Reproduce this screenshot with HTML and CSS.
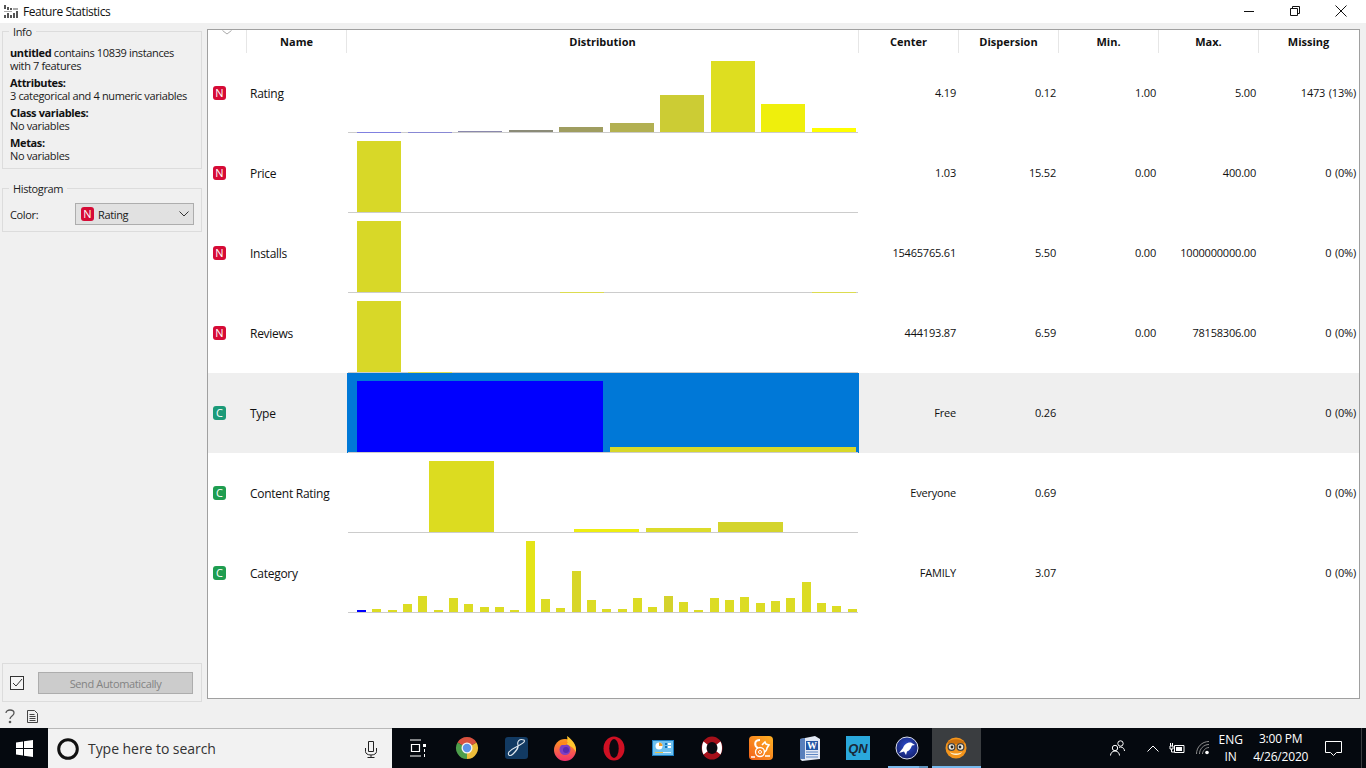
FILE: index.html
```html
<!DOCTYPE html>
<html lang="en">
<head>
<meta charset="utf-8">
<title>Feature Statistics</title>
<link rel="stylesheet" href="styles.css">
</head>
<body>
<div class="window">
  <header class="titlebar">
    <svg class="app-icon" width="15" height="13" viewBox="0 0 15 13"><path fill="#555" d="M0 0h2v4H0zM3 2h2v3H3zM6 3h2v2H6zM0 10h2v3H0zM3 8h2v5H3zM6 10h2v3H6zM9 8h2v5H9zM12 6h2v7h-2z"/><path fill="#aaa" d="M0 6h8v1H0zM9 3h5v2H9z"/></svg>
    <span class="title">Feature Statistics</span>
    <div class="controls">
      <svg width="12" height="12" viewBox="0 0 12 12"><path stroke="#111" d="M1 6.500h10"/></svg>
      <svg width="12" height="12" viewBox="0 0 12 12" fill="none"><path stroke="#111" d="M1.500 3.500h7v7h-7zM3.500 3.500v-2h7v7h-2"/></svg>
      <svg width="12" height="12" viewBox="0 0 12 12"><path stroke="#111" d="M.5.500l11 11M11.500.500l-11 11"/></svg>
    </div>
  </header>
  <main class="main">
    <aside class="sidebar">
      <fieldset class="group">
        <legend>Info</legend>
        <p><b>untitled</b> contains 10839 instances<br>with 7 features</p>
        <p><b>Attributes:</b><br>3 categorical and 4 numeric variables</p>
        <p><b>Class variables:</b><br>No variables</p>
        <p><b>Metas:</b><br>No variables</p>
      </fieldset>
      <fieldset class="group histogram">
        <legend>Histogram</legend>
        <div class="color-row">
          <span>Color:</span>
          <div class="combo">
            <span class="badge num">N</span>
            <span class="combo-text">Rating</span>
            <svg width="10" height="6" viewBox="0 0 10 6" fill="none"><path stroke="#333" d="M.5.500L5 5 9.500.500"/></svg>
          </div>
        </div>
      </fieldset>
      <div class="send-box">
        <span class="check"><svg width="12" height="12" viewBox="0 0 12 12" fill="none"><path stroke="#333" d="M2 6l3 3 6-7"/></svg></span>
        <div class="send-btn">Send Automatically</div>
      </div>
      <div class="footer-icons">
        <svg width="10" height="15" viewBox="0 0 10 15" fill="none"><path stroke="#555" stroke-width="1.300" d="M1 4c0-4 8-4 8 0 0 3-4 3-4 6"/><circle cx="5" cy="13" r="1.300" fill="#555"/></svg>
        <svg width="11" height="13" viewBox="0 0 11 13" fill="none"><path stroke="#444" d="M.5.500h7l3 3v9H.500zM2.500 4.500h5M2.500 6.500h6M2.500 8.500h6M2.500 10.500h6"/></svg>
      </div>
    </aside>
    <section class="content">
      <div class="table">
        <div class="row head">
          <div class="hcell sort"><svg width="10" height="5" viewBox="0 0 10 5" fill="none"><path stroke="#aaa" d="M.5.500L5 4 9.500.500"/></svg></div>
          <div class="hcell">Name</div>
          <div class="hcell">Distribution</div>
          <div class="hcell">Center</div>
          <div class="hcell">Dispersion</div>
          <div class="hcell">Min.</div>
          <div class="hcell">Max.</div>
          <div class="hcell">Missing</div>
        </div>

        <div class="row">
          <div class="cell icon"><span class="badge num">N</span></div>
          <div class="cell name">Rating</div>
          <div class="dist"><svg width="512" height="80" viewBox="0 0 512 80">
            <rect x="112" y="78" width="44" height="1" fill="#8a88ac"/>
            <rect x="163" y="77" width="44" height="2" fill="#8b8b78"/>
            <rect x="213" y="74" width="44" height="5" fill="#9f9d60"/>
            <rect x="264" y="70" width="44" height="9" fill="#b2b052"/>
            <rect x="314" y="42" width="44" height="37" fill="#cccc34"/>
            <rect x="365" y="8" width="44" height="71" fill="#dede20"/>
            <rect x="415" y="51" width="44" height="28" fill="#efef0c"/>
            <rect x="466" y="75" width="44" height="4" fill="#ffff00"/>
            <rect class="axis" x="2" y="79" width="510" height="1"/>
            <rect x="11" y="79" width="44" height="1" fill="#8080e0"/>
            <rect x="62" y="79" width="44" height="1" fill="#8888d4"/>
          </svg></div>
          <div class="cell val">4.19</div>
          <div class="cell val">0.12</div>
          <div class="cell val">1.00</div>
          <div class="cell val">5.00</div>
          <div class="cell val">1473 (13%)</div>
        </div>

        <div class="row">
          <div class="cell icon"><span class="badge num">N</span></div>
          <div class="cell name">Price</div>
          <div class="dist"><svg width="512" height="80" viewBox="0 0 512 80">
            <rect x="11" y="8" width="44" height="71" fill="#d8d828"/>
            <rect class="axis" x="2" y="79" width="510" height="1"/>
          </svg></div>
          <div class="cell val">1.03</div>
          <div class="cell val">15.52</div>
          <div class="cell val">0.00</div>
          <div class="cell val">400.00</div>
          <div class="cell val">0 (0%)</div>
        </div>

        <div class="row">
          <div class="cell icon"><span class="badge num">N</span></div>
          <div class="cell name">Installs</div>
          <div class="dist"><svg width="512" height="80" viewBox="0 0 512 80">
            <rect x="11" y="8" width="44" height="71" fill="#d8d828"/>
            <rect class="axis" x="2" y="79" width="510" height="1"/>
            <rect x="214" y="79" width="44" height="1" fill="#dcdc50"/>
            <rect x="466" y="79" width="44" height="1" fill="#dcdc50"/>
          </svg></div>
          <div class="cell val">15465765.61</div>
          <div class="cell val">5.50</div>
          <div class="cell val">0.00</div>
          <div class="cell val">1000000000.00</div>
          <div class="cell val">0 (0%)</div>
        </div>

        <div class="row">
          <div class="cell icon"><span class="badge num">N</span></div>
          <div class="cell name">Reviews</div>
          <div class="dist"><svg width="512" height="80" viewBox="0 0 512 80">
            <rect x="11" y="8" width="44" height="71" fill="#d8d828"/>
            <rect class="axis" x="2" y="79" width="510" height="1"/>
            <rect x="62" y="79" width="44" height="1" fill="#dcdc50"/>
          </svg></div>
          <div class="cell val">444193.87</div>
          <div class="cell val">6.59</div>
          <div class="cell val">0.00</div>
          <div class="cell val">78158306.00</div>
          <div class="cell val">0 (0%)</div>
        </div>

        <div class="row selected">
          <div class="cell icon"><span class="badge teal">C</span></div>
          <div class="cell name">Type</div>
          <div class="dist"><svg width="512" height="80" viewBox="0 0 512 80">
            <rect x="1" y="0" width="512" height="80" fill="#0078d7"/>
            <rect x="11" y="8" width="246" height="71" fill="#0000ff"/>
            <rect x="264" y="74" width="246" height="5" fill="#d8d828"/>
            <rect class="axis" x="2" y="79" width="510" height="1"/>
          </svg></div>
          <div class="cell val">Free</div>
          <div class="cell val">0.26</div>
          <div class="cell val"></div>
          <div class="cell val"></div>
          <div class="cell val">0 (0%)</div>
        </div>

        <div class="row">
          <div class="cell icon"><span class="badge green">C</span></div>
          <div class="cell name">Content Rating</div>
          <div class="dist"><svg width="512" height="80" viewBox="0 0 512 80">
            <rect x="83" y="8" width="65" height="71" fill="#dcdc20"/>
            <rect x="228" y="76" width="65" height="3" fill="#eeee10"/>
            <rect x="300" y="75" width="65" height="4" fill="#dcdc2a"/>
            <rect x="372" y="69" width="65" height="10" fill="#d4d42c"/>
            <rect class="axis" x="2" y="79" width="510" height="1"/>
          </svg></div>
          <div class="cell val">Everyone</div>
          <div class="cell val">0.69</div>
          <div class="cell val"></div>
          <div class="cell val"></div>
          <div class="cell val">0 (0%)</div>
        </div>

        <div class="row">
          <div class="cell icon"><span class="badge green">C</span></div>
          <div class="cell name">Category</div>
          <div class="dist"><svg width="512" height="80" viewBox="0 0 512 80">
            <rect x="11" y="77" width="9" height="2" fill="#0000ff"/>
            <g fill="#dcdc24">
            <rect x="26" y="76" width="9" height="3"/>
            <rect x="42" y="77" width="9" height="2"/>
            <rect x="57" y="71" width="9" height="8"/>
            <rect x="72" y="63" width="9" height="16"/>
            <rect x="88" y="77" width="9" height="2"/>
            <rect x="103" y="65" width="9" height="14"/>
            <rect x="118" y="71" width="9" height="8"/>
            <rect x="134" y="74" width="9" height="5"/>
            <rect x="149" y="74" width="9" height="5"/>
            <rect x="164" y="77" width="9" height="2"/>
            <rect x="180" y="8" width="9" height="71" fill="#e4e418"/>
            <rect x="195" y="66" width="9" height="13"/>
            <rect x="210" y="75" width="9" height="4"/>
            <rect x="226" y="38" width="9" height="41" fill="#d8d628"/>
            <rect x="241" y="67" width="9" height="12"/>
            <rect x="256" y="76" width="9" height="3"/>
            <rect x="272" y="76" width="9" height="3"/>
            <rect x="287" y="65" width="9" height="14"/>
            <rect x="302" y="74" width="9" height="5"/>
            <rect x="318" y="63" width="9" height="16" fill="#d4d22c"/>
            <rect x="333" y="69" width="9" height="10"/>
            <rect x="348" y="77" width="9" height="2"/>
            <rect x="364" y="65" width="9" height="14"/>
            <rect x="379" y="67" width="9" height="12"/>
            <rect x="394" y="64" width="9" height="15"/>
            <rect x="410" y="70" width="9" height="9"/>
            <rect x="425" y="68" width="9" height="11"/>
            <rect x="440" y="65" width="9" height="14"/>
            <rect x="456" y="49" width="9" height="30"/>
            <rect x="471" y="70" width="9" height="9"/>
            <rect x="486" y="73" width="9" height="6"/>
            <rect x="502" y="76" width="9" height="3"/>
            </g>
            <rect class="axis" x="2" y="79" width="510" height="1"/>
          </svg></div>
          <div class="cell val">FAMILY</div>
          <div class="cell val">3.07</div>
          <div class="cell val"></div>
          <div class="cell val"></div>
          <div class="cell val">0 (0%)</div>
        </div>
      </div>
    </section>
  </main>
  <footer class="taskbar">
    <div class="start"><svg width="17" height="17" viewBox="0 0 17 17"><path fill="#fff" d="M0 2.500l7-1v6.500H0zM8 1.300L17 0v8H8zM0 9h7v6.500l-7-1zM8 9h9v8l-9-1.300z"/></svg></div>
    <div class="search">
      <svg width="24" height="24" viewBox="0 0 24 24" fill="none"><circle cx="12" cy="12" r="9.300" stroke="#111" stroke-width="3"/></svg>
      <span class="search-text">Type here to search</span>
      <svg class="mic" width="12" height="18" viewBox="0 0 12 18" fill="none"><path stroke="#222" d="M3.500 1.500h5v10h-5zM.5 8v3.500c0 2 2 3.500 5.500 3.500s5.500-1.500 5.500-3.500V8M6 15v2.500M2.500 17.500h7"/></svg>
    </div>
    <div class="apps">
      <div class="app"><svg width="16" height="18" viewBox="0 0 16 18" fill="none"><path stroke="#fff" stroke-width="1.200" d="M0 1h11M0 17h11M1.500 5.500h8v7h-8z"/><path fill="#fff" d="M13 5h3v3h-3z"/><path stroke="#fff" d="M14.500 10v3M14.500 15v3"/></svg></div>
      <div class="app"><svg width="24" height="24" viewBox="0 0 24 24"><path fill="#d8513f" d="M12 12L2.470 6.500A11 11 0 0 1 21.530 6.500z"/><path fill="#eebd3a" d="M12 12L21.530 6.500A11 11 0 0 1 12 23z"/><path fill="#4d9e4b" d="M12 12L12 23A11 11 0 0 1 2.470 6.500z"/><circle cx="12" cy="12" r="5.500" fill="#f4f4f4"/><circle cx="12" cy="12" r="4.200" fill="#5b93e8"/></svg></div>
      <div class="app"><svg width="23" height="22" viewBox="0 0 23 22"><rect width="23" height="22" rx="3" fill="#123a62"/><path fill="none" stroke="#dfe7ee" stroke-width="1.100" d="M19 3C14 1 12 5 13 8c.8 3-1 5-5 9-3 3-6 1-4-2 2-3 6-4 9-6 3-2 8-4 6-6z"/></svg></div>
      <div class="app"><svg width="24" height="25" viewBox="0 0 24 25"><defs><linearGradient id="fx" x1="0" y1="0" x2="0" y2="1"><stop offset="0" stop-color="#ff9a1e"/><stop offset="1" stop-color="#f2306e"/></linearGradient></defs><circle cx="12" cy="14" r="11" fill="url(#fx)"/><path fill="#ffc52e" d="M14 0c3 2 5 4 7 7 2 3 2 7 2 9-2-4-6-7-10-7 1-3 2-5 1-9z"/><circle cx="12" cy="13.500" r="5.500" fill="#7d3fc4"/><circle cx="13" cy="14" r="3" fill="#5a2bb0"/><path fill="#ff8a1c" d="M5 9c2-3 6-4 10-3l-2 3c-3 0-5 0-8 0z"/></svg></div>
      <div class="app"><svg width="22" height="25" viewBox="0 0 22 25"><ellipse cx="11" cy="12.500" rx="10.500" ry="12" fill="#cf1023"/><ellipse cx="11" cy="12.500" rx="4.700" ry="9.500" fill="#0a0a10"/></svg></div>
      <div class="app"><svg width="22" height="16" viewBox="0 0 22 16"><rect width="22" height="16" fill="#1a7cc0"/><rect x="1" y="1" width="20" height="14" fill="#6ec0ef"/><circle cx="7" cy="6" r="3.500" fill="#fff"/><path fill="#f2a12c" d="M7 6V2.500A3.500 3.500 0 0 1 10.500 6z"/><path fill="#1673b8" d="M13 3h2v2h-2zM13 6h2v2h-2z"/><path fill="#fff" d="M16 3h3v2h-3zM16 6h3v2h-3z"/><path fill="#e8c24a" d="M3 12h8v1H3z"/><path fill="#dff1fc" d="M11 12h8v1h-8z"/></svg></div>
      <div class="app"><svg width="22" height="24" viewBox="0 0 22 24"><ellipse cx="11" cy="12" rx="10.500" ry="11.500" fill="#a5101a"/><path fill="#fff" d="M2.500 5.500l4.500 3.500c-1 2-1 4 0 6l-4.500 3.500C.5 15 .5 9 2.500 5.500zM19.500 5.500L15 9c1 2 1 4 0 6l4.500 3.500c2-3.500 2-9.500 0-13z"/><ellipse cx="11" cy="12" rx="5.500" ry="6" fill="#0a0a10"/></svg></div>
      <div class="app"><svg width="24" height="24" viewBox="0 0 24 24"><defs><linearGradient id="uc" x1="0" y1="1" x2="1" y2="0"><stop offset="0" stop-color="#f2601a"/><stop offset="1" stop-color="#ffb224"/></linearGradient></defs><rect width="24" height="24" rx="4" fill="url(#uc)"/><g fill="none" stroke="#fff"><path stroke-width="2" d="M11 4C5 4 5 10 9 12"/><path stroke-width="1.600" d="M13 9l3-3 1 2 3 1-2 3c0 2-1 3-2 4"/><circle cx="11" cy="16" r="4.500" stroke-width="1.300"/><circle cx="11" cy="16" r="1.500"/><path stroke-width="1.300" d="M2 21h4M16 20h5"/></g></svg></div>
      <div class="app"><svg width="22" height="25" viewBox="0 0 22 25"><path fill="#e2e8f4" d="M1 3l15-3 5 3v20L3 25 1 23z"/><path fill="#2b5ca8" d="M1 3l5-1v21H1z" opacity=".75"/><path fill="#2456a6" d="M7 5h12v9H7z"/><text class="word" x="13" y="13">W</text><path stroke="#5c85c2" d="M7 16h12M7 18.500h12M7 21h12"/></svg></div>
      <div class="app"><svg width="24" height="24" viewBox="0 0 24 24"><rect width="24" height="24" fill="#2aa8dc"/><text class="qn" x="12" y="17">QN</text></svg></div>
      <div class="app running"><svg width="24" height="24" viewBox="0 0 24 24"><defs><radialGradient id="bd" cx=".5" cy=".4" r=".6"><stop offset="0" stop-color="#2d4fd0"/><stop offset="1" stop-color="#14206e"/></radialGradient></defs><circle cx="12" cy="12" r="11" fill="url(#bd)" stroke="#d8dce8"/><path fill="#fff" d="M20 9l-4-2.500C12 6 9 9 8 12l-4 5 5-1.500 2 3.500 1-3.500c3-1 4-4 5-6z"/></svg></div>
      <div class="app active"><svg width="22" height="22" viewBox="0 0 22 22"><circle cx="11" cy="11" r="10.500" fill="#f4951c"/><path fill="#c9700e" d="M2 6c3-5 15-5 18 0l-3 1H5z"/><path fill="#fff6d8" d="M5 15c3 2 9 2 12 0-1 4-11 4-12 0z"/><circle cx="6.500" cy="10" r="3.400" fill="#f3eee0" stroke="#444" stroke-width="1.300"/><circle cx="15.500" cy="10" r="3.400" fill="#f3eee0" stroke="#444" stroke-width="1.300"/><circle cx="7" cy="10" r="1.400" fill="#222"/><circle cx="15" cy="10" r="1.400" fill="#222"/></svg></div>
    </div>
    <div class="tray">
      <svg class="t-people" width="16" height="16" viewBox="0 0 16 16" fill="none"><g stroke="#fff"><circle cx="10.500" cy="3.500" r="2.700"/><path d="M14.500 11c0-2-1.500-4-4-4-.6 0-1 .1-1.500.3"/><circle cx="5" cy="8" r="2.700"/><path d="M.5 15.500c0-2 1.500-4.500 4.500-4.500s4.500 2.500 4.500 4.500"/></g></svg>
      <svg class="t-caret" width="12" height="7" viewBox="0 0 12 7" fill="none"><path stroke="#fff" d="M.5 6.500L6 1l5.500 5.500"/></svg>
      <svg class="t-batt" width="16" height="11" viewBox="0 0 16 11" fill="none"><path stroke="#fff" d="M5.500 2.500h9.500v7H5.500zM1 3v3h3V3zM2.500 6v3h3"/><path fill="#fff" d="M7 4h6v4H7zM1 0h1v3H1zM3 0h1v3H3z"/></svg>
      <svg class="t-wifi" width="14" height="14" viewBox="0 0 14 14" fill="none"><g stroke="#8d8d8d"><path d="M.5 13C.5 6 6 .5 13 .5"/><path d="M3.500 13c0-5 4-9.500 9.500-9.500"/><path d="M6.500 13c0-3 3-6.500 6.500-6.500"/></g><circle cx="11" cy="11.500" r="1.800" fill="#fff"/></svg>
      <div class="t-lang">ENG<br>IN</div>
      <div class="t-clock">3:00 PM<br>4/26/2020</div>
      <svg class="t-note" width="17" height="15" viewBox="0 0 17 15" fill="none"><path stroke="#fff" d="M.5.500h16v11H11.500l-3 3-3-3H.5z"/></svg>
      <span class="t-desktop"></span>
    </div>
  </footer>
</div>
</body>
</html>
```

FILE: styles.css
```css
* { box-sizing: border-box; }
html, body { margin: 0; padding: 0; }
body {
  width: 1366px;
  height: 768px;
  overflow: hidden;
  font-family: "Open Sans", "Noto Sans", sans-serif;
  font-size: 11px;
  letter-spacing: -0.36px;
  color: #1a1a1a;
}
.window { display: flex; flex-direction: column; height: 768px; background: #f0f0f0; }

.titlebar {
  display: flex;
  align-items: center;
  height: 23px;
  flex: none;
  background: #fff;
  padding-left: 4px;
}
.app-icon { margin-right: 4px; }
.title { font-size: 12px; letter-spacing: -0.45px; color: #111; }
.controls { display: flex; align-items: center; margin-left: auto; gap: 34px; padding-right: 19px; margin-top: -2px; }

.main { display: flex; flex: 1; min-height: 0; }

.sidebar {
  width: 207px;
  flex: none;
  display: flex;
  flex-direction: column;
  padding: 2px 5px 0 2px;
}
.group {
  margin: 0;
  min-width: 0;
  border: 1px solid #dcdcdc;
  padding: 8px 7px 6px 7px;
  line-height: 13px;
}
.group legend { padding: 0 4px; margin-left: -1px; line-height: 13px; color: #222; }
.group p { margin: 0 0 4px; }
.group p:last-child { margin-bottom: 0; }
.group b { font-weight: 700; color: #111; }
.histogram { margin-top: 13px; }
.color-row { display: flex; align-items: center; justify-content: space-between; }
.combo {
  display: flex;
  align-items: center;
  width: 119px;
  height: 22px;
  background: #e1e1e1;
  border: 1px solid #adadad;
  padding: 0 4px 0 5px;
}
.combo-text { margin-left: 4px; flex: 1; }

.badge {
  display: inline-flex;
  align-items: center;
  justify-content: center;
  width: 13px;
  height: 14px;
  border-radius: 3px;
  color: #fff;
  font-size: 11px;
  line-height: 14px;
  letter-spacing: 0;
}
.num { background: #d60b36; }
.teal { background: #1b9a78; }
.green { background: #1f9d50; }

.send-box {
  margin-top: auto;
  height: 39px;
  border: 1px solid #dcdcdc;
  display: flex;
  align-items: center;
  padding-left: 7px;
}
.check {
  width: 14px;
  height: 14px;
  border: 1px solid #333;
  background: #f5f5f5;
  display: flex;
  align-items: center;
  justify-content: center;
  margin-right: 14px;
}
.send-btn {
  width: 155px;
  height: 22px;
  background: #cccccc;
  border: 1px solid #adadad;
  color: #838383;
  text-align: center;
  line-height: 21px;
}
.footer-icons { display: flex; align-items: center; gap: 12px; height: 26px; padding: 3px 0 0 4px; flex: none; margin-left: -1px; }

.content { flex: 1; padding: 6px 6px 29px 0; min-width: 0; }
.table { height: 100%; background: #fff; border: 1px solid #a0a0a0; }
.row {
  display: grid;
  grid-template-columns: 38px 100px 512px repeat(5, 100px);
  height: 80px;
}
.row.head { height: 23px; }
.selected { background: #efefef; }
.hcell {
  display: flex;
  align-items: center;
  justify-content: center;
  font-weight: 700;
  color: #111;
  font-size: 11px;
  letter-spacing: 0;
  border-left: 1px solid #e6e6e6;
}
.sort { align-items: flex-start; border-left: 0; }
.cell { display: flex; align-items: center; letter-spacing: -0.2px; }
.icon { padding-left: 5px; }
.name { padding-left: 4px; color: #111; font-size: 12px; letter-spacing: -0.27px; }
.val { justify-content: flex-end; padding: 0 2px 1px 0; color: #111; word-spacing: 1px; }
.dist svg { display: block; overflow: visible; }
.axis { fill: #cccccc; }

.taskbar { display: flex; height: 40px; flex: none; background: #05090f; }
.start { width: 48px; display: flex; align-items: center; justify-content: center; flex: none; }
.search {
  width: 344px;
  flex: none;
  background: #f2f2f2;
  border-top: 1px solid #b8b8b8;
  display: flex;
  align-items: center;
  padding-left: 8px;
}
.search-text { margin-left: 8px; font-size: 14px; letter-spacing: -0.05px; color: #333; }
.mic { margin-left: auto; margin-right: 15px; }
.apps { display: flex; margin-left: 2px; flex: none; }
.app {
  width: 48.9px;
  height: 40px;
  display: flex;
  align-items: center;
  justify-content: center;
  position: relative;
}
.running::after {
  content: "";
  position: absolute;
  left: 5px;
  right: 4px;
  bottom: 0;
  height: 2px;
  background: linear-gradient(to right, #7ab8ea 78%, #5f93bd 78%);
}
.active { background: #3a3d40; border-bottom: 2px solid #76b9ed; padding-top: 2px; }
.word { font-family: "Liberation Serif", serif; font-size: 10px; font-weight: 700; fill: #fff; text-anchor: middle; letter-spacing: 0; }
.qn { font-family: "Liberation Sans", sans-serif; font-size: 13px; font-style: italic; font-weight: 700; fill: #1a2a3a; text-anchor: middle; letter-spacing: 0; }

.tray { flex: 1; display: flex; align-items: center; color: #fff; padding-left: 129px; letter-spacing: 0; min-width: 0; }
.t-people { margin-right: 21px; }
.t-caret { margin-right: 10px; }
.t-batt { margin-right: 11px; }
.t-wifi { margin-right: 5px; }
.t-lang { width: 32px; text-align: center; font-size: 12px; line-height: 17px; margin-right: 2px; flex: none; }
.t-clock { width: 64px; text-align: center; font-size: 12px; line-height: 18px; letter-spacing: -0.2px; margin-right: 12px; flex: none; }
.t-note { margin-right: 19px; flex: none; }
.t-desktop { width: 1px; height: 40px; background: #3a3d40; flex: none; }
```
